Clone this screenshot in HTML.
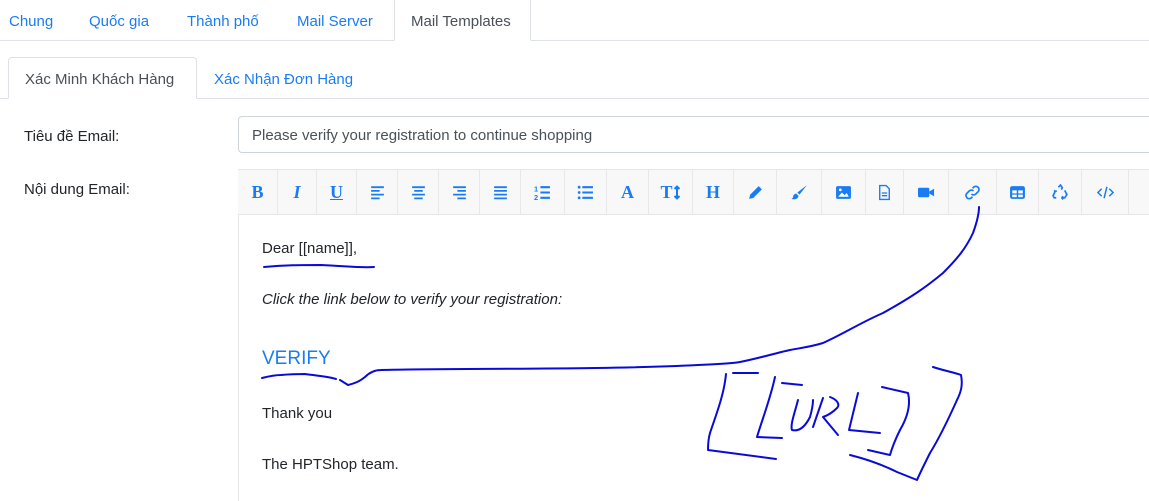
<!DOCTYPE html>
<html><head><meta charset="utf-8"><style>
*{box-sizing:border-box;margin:0;padding:0}
body{width:1149px;height:501px;overflow:hidden;background:#fff;font-family:"Liberation Sans",sans-serif;font-size:15px;color:#212529;position:relative}
.a{position:absolute}
.lnk{color:#1a7cf5}
.tb{position:absolute;top:169px;height:46px;left:238px;width:920px;background:#f8f8f8;border-top:1px solid #e6e6e6;border-bottom:1px solid #e6e6e6}
.btn{position:absolute;top:0;height:44px;border-right:1px solid #e8e8e8;display:flex;align-items:center;justify-content:center;color:#1a7cf5}
.btn svg{width:17px;height:17px}
.t{font-family:"Liberation Serif",serif;font-weight:bold;font-size:18px}
</style></head><body>
<div class="a" style="left:0;top:40px;width:1149px;border-top:1px solid #dee2e6"></div>
<div class="a lnk" style="left:9px;top:13px">Chung</div>
<div class="a lnk" style="left:89px;top:13px">Quốc gia</div>
<div class="a lnk" style="left:187px;top:13px">Thành phố</div>
<div class="a lnk" style="left:297px;top:13px">Mail Server</div>
<div class="a" style="left:394px;top:0;width:137px;height:41px;border:1px solid #dee2e6;border-bottom:1px solid #fff;border-top:none;background:#fff;color:#495057;padding:13px 0 0 16px">Mail Templates</div>
<div class="a" style="left:0;top:98px;width:1149px;border-top:1px solid #dee2e6"></div>
<div class="a" style="left:8px;top:57px;width:189px;height:42px;border:1px solid #dee2e6;border-bottom:1px solid #fff;border-radius:4px 4px 0 0;background:#fff;color:#495057;padding:13px 0 0 16px">Xác Minh Khách Hàng</div>
<div class="a lnk" style="left:214px;top:71px">Xác Nhận Đơn Hàng</div>
<div class="a" style="left:24px;top:128px">Tiêu đề Email:</div>
<div class="a" style="left:238px;top:116px;width:930px;height:37px;border:1px solid #ced4da;border-radius:4px;padding:10px 0 0 13px;color:#495057">Please verify your registration to continue shopping</div>
<div class="a" style="left:24px;top:181px">Nội dung Email:</div>
<div class="a" style="left:238px;top:169px;width:1px;height:332px;background:#e6e6e6"></div>
<div class="tb">
<div class="btn" style="left:0;width:40px"><span class="t">B</span></div>
<div class="btn" style="left:40px;width:39px"><span class="t" style="font-style:italic">I</span></div>
<div class="btn" style="left:79px;width:40px"><span class="t" style="text-decoration:underline">U</span></div>
<div class="btn" style="left:119px;width:41px"><svg viewBox="0 0 16 16"><path d="M2 3h12M2 6.5h8M2 10h12M2 13.5h8" stroke="currentColor" stroke-width="1.7"/></svg></div>
<div class="btn" style="left:160px;width:41px"><svg viewBox="0 0 16 16"><path d="M2 3h12M4 6.5h8M2 10h12M4 13.5h8" stroke="currentColor" stroke-width="1.7"/></svg></div>
<div class="btn" style="left:201px;width:41px"><svg viewBox="0 0 16 16"><path d="M2 3h12M6 6.5h8M2 10h12M6 13.5h8" stroke="currentColor" stroke-width="1.7"/></svg></div>
<div class="btn" style="left:242px;width:41px"><svg viewBox="0 0 16 16"><path d="M2 3h12M2 6.5h12M2 10h12M2 13.5h12" stroke="currentColor" stroke-width="1.7"/></svg></div>
<div class="btn" style="left:283px;width:44px"><svg viewBox="0 0 16 16"><path d="M6 3h9M6 8h9M6 13h9" stroke="currentColor" stroke-width="1.9"/><text x="0" y="7" font-size="7" font-weight="bold" fill="currentColor" font-family="Liberation Sans">1</text><text x="0" y="15" font-size="7" font-weight="bold" fill="currentColor" font-family="Liberation Sans">2</text></svg></div>
<div class="btn" style="left:327px;width:42px"><svg viewBox="0 0 16 16"><path d="M5 3h10M5 8h10M5 13h10" stroke="currentColor" stroke-width="1.9"/><circle cx="2" cy="3" r="1.3" fill="currentColor"/><circle cx="2" cy="8" r="1.3" fill="currentColor"/><circle cx="2" cy="13" r="1.3" fill="currentColor"/></svg></div>
<div class="btn" style="left:369px;width:42px"><span class="t">A</span></div>
<div class="btn" style="left:411px;width:44px"><span class="t">T</span><svg viewBox="0 0 8 16" style="width:8px"><path d="M4 2v12M1.5 4.5L4 2l2.5 2.5M1.5 11.5L4 14l2.5-2.5" stroke="currentColor" stroke-width="2" fill="none"/></svg></div>
<div class="btn" style="left:455px;width:41px"><span class="t">H</span></div>
<div class="btn" style="left:496px;width:43px"><svg viewBox="0 0 16 16"><path d="M11 2l3 3-8 8-4 1 1-4z" fill="currentColor"/></svg></div>
<div class="btn" style="left:539px;width:45px"><svg viewBox="0 0 16 16"><path d="M15 1L8 10l-2-2z" fill="currentColor"/><path d="M5 9c-2 0-3 2-3 3s-1 2-2 2c3 1 7 0 7-3z" fill="currentColor"/></svg></div>
<div class="btn" style="left:584px;width:44px"><svg viewBox="0 0 16 16"><rect x="1" y="2" width="14" height="12" rx="1.5" fill="currentColor"/><path d="M3 12l3.5-4 2.5 2.5 2-2 2 3.5z" fill="#fff"/><circle cx="5" cy="5.5" r="1.3" fill="#fff"/></svg></div>
<div class="btn" style="left:628px;width:38px"><svg viewBox="0 0 16 16"><path d="M3.5 1.5h6l3 3v10h-9z" fill="none" stroke="currentColor" stroke-width="1.3"/><path d="M5.5 8.5h5M5.5 11h5" stroke="currentColor" stroke-width="1.2"/></svg></div>
<div class="btn" style="left:666px;width:45px"><svg viewBox="0 0 18 16"><rect x="0" y="3" width="12" height="10" rx="1.5" fill="currentColor"/><path d="M12 7l5-3v8l-5-3z" fill="currentColor"/></svg></div>
<div class="btn" style="left:711px;width:48px"><svg viewBox="0 0 16 16"><path d="M7 9.5a3 3 0 0 0 4 0l2.5-2.5a3 3 0 0 0-4.2-4.2L8 4M9 6.5a3 3 0 0 0-4 0L2.5 9a3 3 0 0 0 4.2 4.2L8 12" stroke="currentColor" stroke-width="1.6" fill="none"/></svg></div>
<div class="btn" style="left:759px;width:42px"><svg viewBox="0 0 16 16"><rect x="1" y="2" width="14" height="12" rx="2" fill="currentColor"/><path d="M3 6h4.3v2.8H3zM8.7 6H13v2.8H8.7zM3 10h4.3v2.3H3zM8.7 10H13v2.3H8.7z" fill="#fff"/></svg></div>
<div class="btn" style="left:801px;width:43px"><svg viewBox="0 0 16 16"><path d="M6 3l2-2 2 3M12 6l2 4-2 3h-3M4 13H2l-1-2 2-4M10 4l-1.5 1M9 13l1.5 1.5M9 13l1.5-1.5M3 7l-1-1M3 7l1.5-.5" stroke="currentColor" stroke-width="1.6" fill="none"/></svg></div>
<div class="btn" style="left:844px;width:47px"><svg viewBox="0 0 18 16"><path d="M5 4L1 8l4 4M13 4l4 4-4 4M10.5 2l-3 12" stroke="currentColor" stroke-width="1.6" fill="none"/></svg></div>
</div>
<div class="a" style="left:262px;top:240px">Dear [[name]],</div>
<div class="a" style="left:262px;top:291px;font-style:italic">Click the link below to verify your registration:</div>
<div class="a lnk" style="left:262px;top:348px;font-size:19px">VERIFY</div>
<div class="a" style="left:262px;top:405px">Thank you</div>
<div class="a" style="left:262px;top:456px">The HPTShop team.</div>
<svg class="a" style="left:0;top:0" width="1149" height="501" viewBox="0 0 1149 501" fill="none" stroke="#0a0ad8" stroke-width="2" stroke-linecap="round" stroke-linejoin="round">
<path d="M264 267C285 265 300 265 321 265C345 266 360 268 374 267"/>
<path d="M262 378C270 376 275 375 281 375C292 374 300 374 305 374C320 376 330 377 336 379"/>
<path d="M340 380L348 385C356 383 360 381 365 377C370 372 375 370 381 370C450 368 600 370 698 365C720 364 735 363 740 362C760 358 780 352 790 350C800 348 810 347 823 343C845 333 860 323 883 313C910 298 925 288 943 273C958 258 966 248 973 233C977 222 979 214 979 207"/>
<path d="M733 373L758 373M726 374C724 395 716 415 710 433C708 440 708 446 708 450L776 459"/>
<path d="M775 377C770 400 762 420 757 437L782 438M782 383L802 385"/>
<path d="M798 400C795 412 790 425 792 430C800 432 806 425 810 417C812 410 813 404 813 400"/>
<path d="M823 398L813 427M830 397C838 400 840 405 837 408C832 413 826 416 823 417L838 435"/>
<path d="M858 393L849 430L880 433"/>
<path d="M882 387L908 393C911 405 907 418 900 430C895 440 892 448 890 455L868 450"/>
<path d="M933 367C945 371 953 372 961 375C963 385 961 392 957 400C948 420 940 437 930 453C924 465 920 473 917 480M850 455C870 460 885 466 897 472L917 480"/>
</svg>
</body></html>
